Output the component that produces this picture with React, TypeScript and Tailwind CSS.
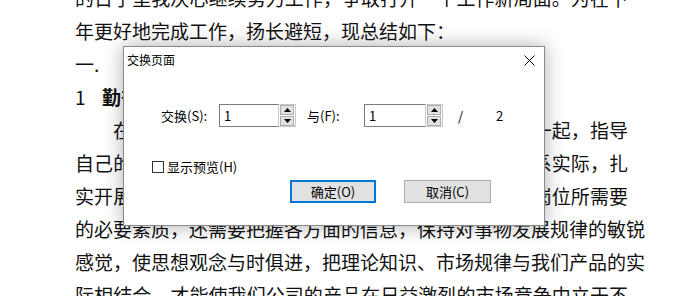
import React from 'react';

const DOC_FONT = { fontFamily: '"Noto Sans CJK SC", "Noto Sans", sans-serif' };

// document text behind the dialog; justified lines fill the column
const LINES: { text: React.ReactNode; justify?: boolean; indent?: boolean }[] = [
  { text: '的日子里我决心继续努力工作，争取打开一个工作新局面。为在下', justify: true },
  { text: '年更好地完成工作，扬长避短，现总结如下：' },
  { text: <><span>一.</span><span className="ml-[34px]">工作回顾与总结</span></> },
  { text: <><span className="inline-block w-[27px]">1</span><span className="font-bold">勤奋学习，提高素质</span></> },
  { text: '在工作中，我始终注重把学习和自己的工作结合在一起，指导', justify: true, indent: true },
  { text: '自己的具体工作实践，在实践中不断总结经验，理论联系实际，扎', justify: true },
  { text: '实开展各项工作。要做好本职工作，不仅要努力具备本岗位所需要', justify: true },
  { text: '的必要素质，还需要把握各方面的信息，保持对事物发展规律的敏锐', justify: true },
  { text: '感觉，使思想观念与时俱进，把理论知识、市场规律与我们产品的实', justify: true },
  { text: '际相结合，才能使我们公司的产品在日益激烈的市场竞争中立于不', justify: true },
];

function Spin() {
  return (
    <div className="flex h-full w-[18px] flex-col justify-center gap-[1px] border border-[#c8c8c8] bg-white px-[1px]">
      <div className="flex h-[10px] items-center justify-center border border-[#adadad] bg-[#e1e1e1]">
        <svg width="7" height="4" viewBox="0 0 7 4"><path d="M3.5 0 L7 4 L0 4 Z" fill="#000" /></svg>
      </div>
      <div className="flex h-[10px] items-center justify-center border border-[#adadad] bg-[#e1e1e1]">
        <svg width="7" height="4" viewBox="0 0 7 4"><path d="M0 0 L7 0 L3.5 4 Z" fill="#000" /></svg>
      </div>
    </div>
  );
}

function NumberBox({ value, width }: { value: string; width: string }) {
  return (
    <div className={`flex h-[23px] ${width}`}>
      <div className="flex flex-1 items-center border border-r-0 border-[#7a7a7a] bg-white pl-[4px] pt-[1px] text-[13px]">
        {value}
      </div>
      <Spin />
    </div>
  );
}

export default function App() {
  return (
    <div className="relative h-[296px] w-[680px] overflow-hidden bg-white text-black" style={DOC_FONT}>
      {/* document */}
      <div className="-mt-[19px] ml-[75px] w-[553px] text-[19px] text-[#111]">
        {LINES.map((l, i) => (
          <div
            key={i}
            className={`h-[33px] whitespace-nowrap leading-[33px] ${l.justify ? 'text-justify [text-align-last:justify]' : ''} ${l.indent ? 'pl-[38px]' : ''}`}
          >
            {l.text}
          </div>
        ))}
      </div>

      {/* dialog */}
      <div className="absolute left-[123px] top-[46px] flex h-[180px] w-[422px] flex-col border border-[#8a8a8a] bg-white shadow-[0_0_18px_rgba(0,0,0,0.32)]">
        <div className="flex h-[24px] items-center justify-between pl-[3px] pr-[9px] pt-[1px] text-[12px]">
          <span>交换页面</span>
          <svg width="11" height="11" viewBox="0 0 11 11" className="mt-[1px]">
            <path d="M0.5 0.5 L10.5 10.5 M10.5 0.5 L0.5 10.5" stroke="#000" strokeWidth="1" />
          </svg>
        </div>

        <div className="mt-[33px] flex h-[23px] items-center text-[13px]">
          <span className="ml-[37px] w-[58px]">交换(S):</span>
          <NumberBox value="1" width="w-[77px]" />
          <span className="ml-[11px] w-[57px]">与(F):</span>
          <NumberBox value="1" width="w-[79px]" />
          <span className="ml-[15px]">/</span>
          <span className="ml-[33px]">2</span>
        </div>

        <div className="ml-[28px] mt-[33px] flex items-center gap-[3px] text-[13px]">
          <div className="h-[12px] w-[12px] border border-[#333]" />
          <span className="leading-[14px]">显示预览(H)</span>
        </div>

        <div className="ml-[166px] mt-[6px] flex gap-[28px] text-[13px]">
          <button className="flex h-[23px] w-[86px] items-center justify-center border-2 border-[#0078d7] bg-[#e1e1e1]">
            确定(O)
          </button>
          <button className="flex h-[23px] w-[87px] items-center justify-center border border-[#adadad] bg-[#e1e1e1]">
            取消(C)
          </button>
        </div>
      </div>
    </div>
  );
}
